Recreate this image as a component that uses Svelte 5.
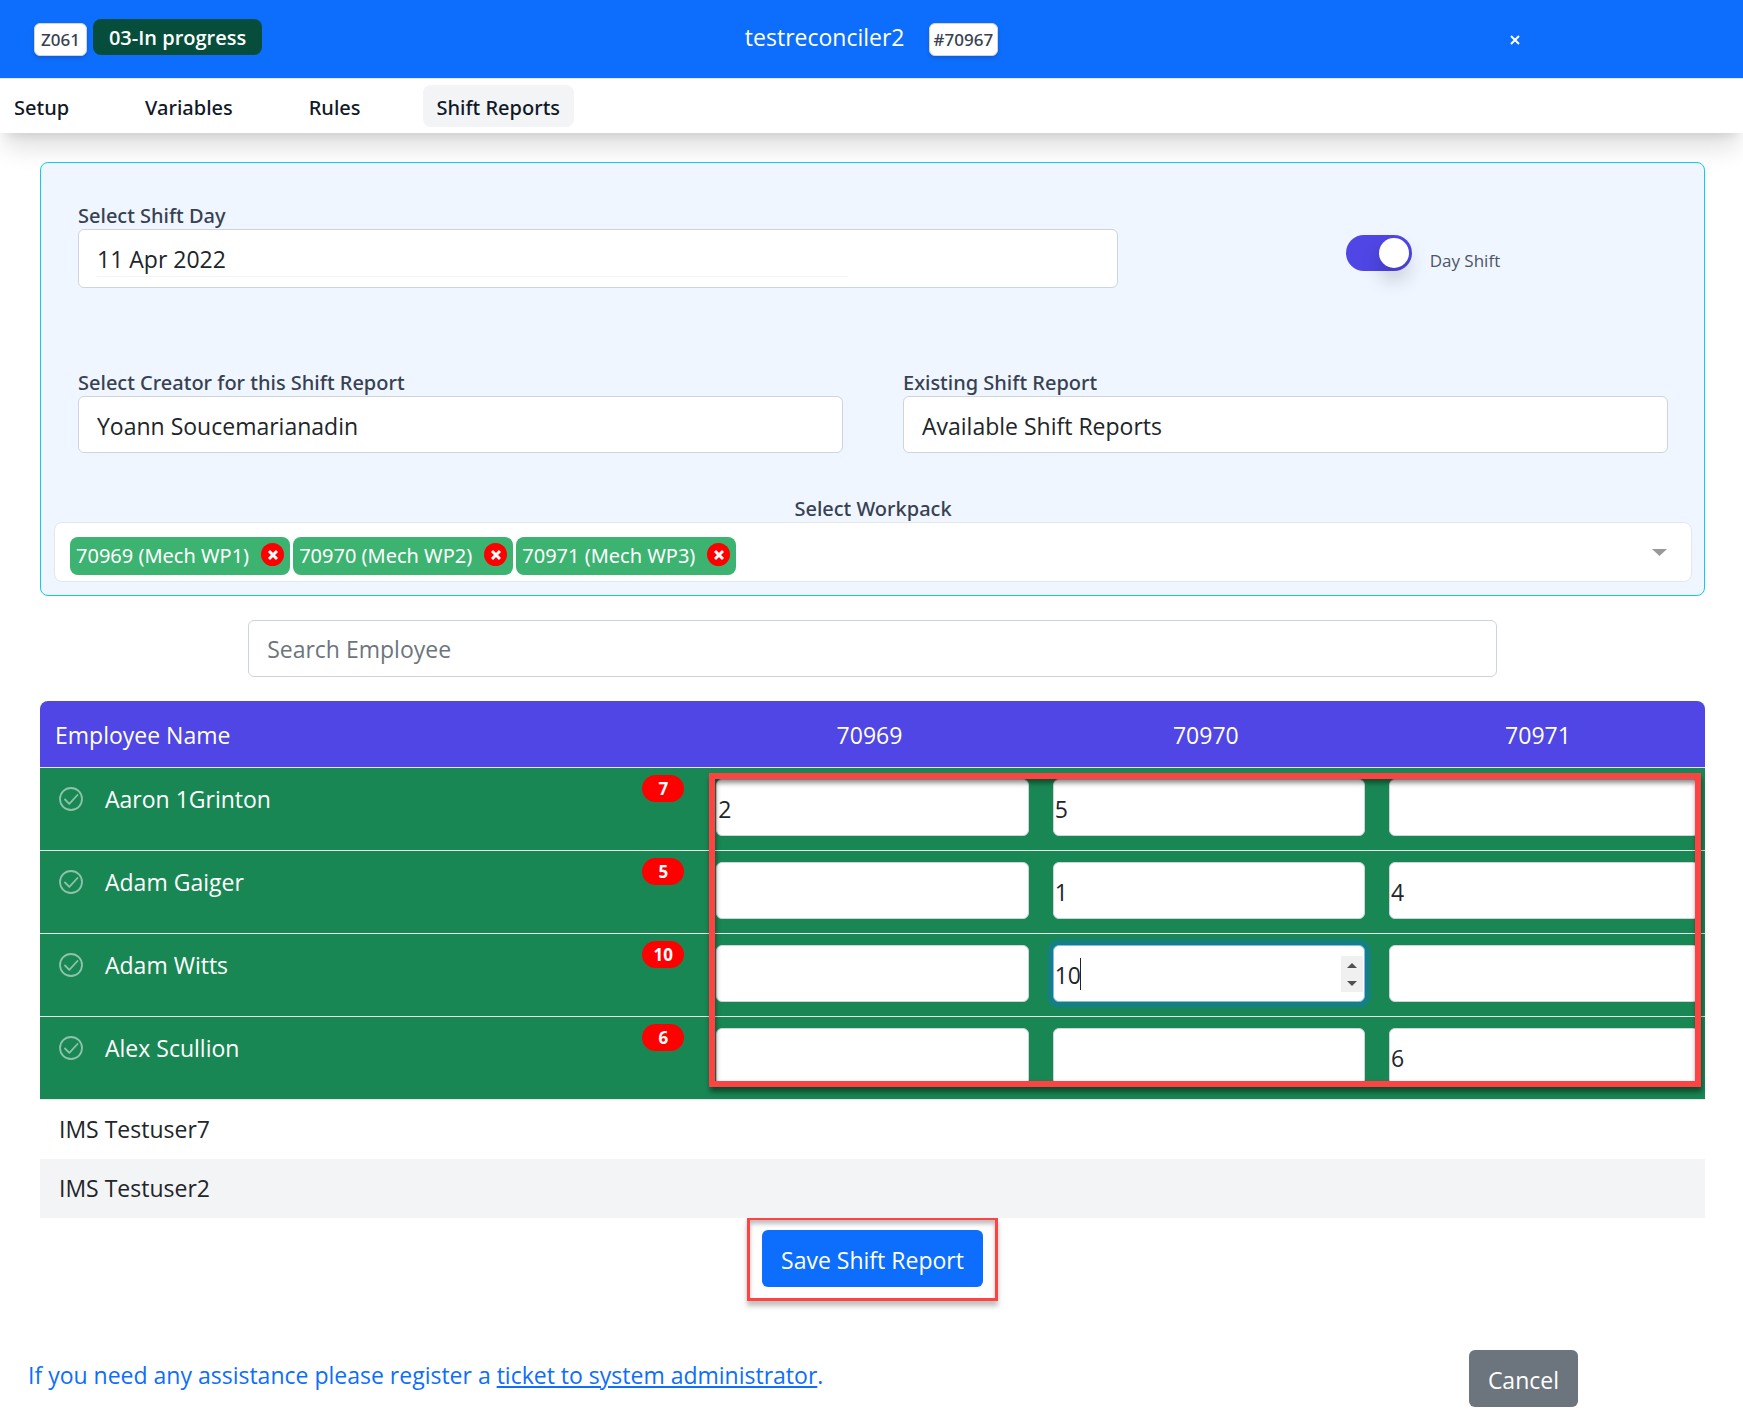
<script>
    import { onMount } from 'svelte';

    const tabs = ['Setup', 'Variables', 'Rules', 'Shift Reports'];
    const activeTab = 'Shift Reports';

    let workpacks = [
        { id: '70969', name: 'Mech WP1' },
        { id: '70970', name: 'Mech WP2' },
        { id: '70971', name: 'Mech WP3' }
    ];

    let employees = [
        { name: 'Aaron 1Grinton', hours: [2, 5, null] },
        { name: 'Adam Gaiger', hours: [null, 1, 4] },
        { name: 'Adam Witts', hours: [null, 10, null] },
        { name: 'Alex Scullion', hours: [null, null, 6] }
    ];

    const others = ['IMS Testuser7', 'IMS Testuser2'];
    const digitWidth = 13;

    let shiftDay = '11 Apr 2022';
    let dayShift = true;
    let search = '';
    let active = 'hours-2-1';
    let tableEl;

    function total(hours) {
        return hours.reduce((sum, h) => sum + (h || 0), 0);
    }

    function step(i, j, by) {
        employees[i].hours[j] = Math.max(0, (employees[i].hours[j] || 0) + by);
    }

    function caretLeft(value) {
        return 1 + String(value ?? '').length * digitWidth;
    }

    function removeWorkpack(id) {
        workpacks = workpacks.filter((w) => w.id !== id);
    }

    onMount(() => {
        tableEl.querySelector('#' + active).focus();
    });
</script>

<header class="topbar">
    <div class="status">
        <span class="tag">Z061</span>
        <span class="progress">03-In progress</span>
    </div>
    <div class="heading">
        <h1>testreconciler2</h1>
        <span class="tag">#70967</span>
    </div>
    <div class="close-wrap">
        <button class="close" type="button" aria-label="Close">
            <svg viewBox="0 0 10 10" width="10" height="10">
                <path d="M1 1L9 9M9 1L1 9" stroke="#fff" stroke-width="2" fill="none" />
            </svg>
        </button>
    </div>
</header>

<nav class="tabs">
    {#each tabs as tab}
        <a href="#{tab}" class:active={tab === activeTab}>{tab}</a>
    {/each}
</nav>

<main>
    <section class="panel">
        <div class="row day-row">
            <div class="field">
                <label for="day">Select Shift Day</label>
                <div class="control date">
                    <input id="day" type="text" bind:value={shiftDay} />
                </div>
            </div>
            <label class="toggle">
                <input type="checkbox" role="switch" bind:checked={dayShift} />
                <span>Day Shift</span>
            </label>
        </div>

        <div class="row">
            <div class="field">
                <label for="creator">Select Creator for this Shift Report</label>
                <select id="creator" class="control">
                    <option>Yoann Soucemarianadin</option>
                </select>
            </div>
            <div class="field">
                <label for="existing">Existing Shift Report</label>
                <select id="existing" class="control">
                    <option>Available Shift Reports</option>
                </select>
            </div>
        </div>

        <div class="workpack">
            <span class="label" id="workpack-label">Select Workpack</span>
            <div class="multi" role="group" aria-labelledby="workpack-label">
                <div class="chips">
                    {#each workpacks as wp}
                        <span class="chip">
                            {wp.id} ({wp.name})
                            <button type="button" aria-label="Remove {wp.id}" on:click={() => removeWorkpack(wp.id)}>
                                <svg viewBox="0 0 12 12" width="12" height="12">
                                    <path d="M2 2L10 10M10 2L2 10" stroke="#fff" stroke-width="3" fill="none" />
                                </svg>
                            </button>
                        </span>
                    {/each}
                </div>
                <button class="caret" type="button" aria-label="Open workpacks">
                    <svg viewBox="0 0 15 7" width="15" height="7"><path d="M0 0H15L7.5 7Z" fill="#999" /></svg>
                </button>
            </div>
        </div>
    </section>

    <input class="control search" type="search" aria-label="Search Employee" placeholder="Search Employee" bind:value={search} />

    <div class="table-wrap">
        <table bind:this={tableEl}>
            <colgroup>
                <col class="col-name" />
                <col class="col-hours" />
                <col class="col-hours" />
                <col />
            </colgroup>
            <thead>
                <tr>
                    <th scope="col" class="name-head">Employee Name</th>
                    {#each workpacks as wp}
                        <th scope="col">{wp.id}</th>
                    {/each}
                </tr>
            </thead>
            <tbody>
                {#each employees as employee, i}
                    <tr class="selected">
                        <td class="name-cell">
                            <div class="name">
                                <svg viewBox="0 0 24 24" width="24" height="24" fill="none" stroke="#fff" stroke-opacity="0.5">
                                    <circle cx="12" cy="12" r="11" stroke-width="1.8" />
                                    <path d="M6 12.5L10.3 16.8L18.5 8" stroke-width="1.8" stroke-linecap="round" stroke-linejoin="round" />
                                </svg>
                                <span>{employee.name}</span>
                                <span class="total">{total(employee.hours)}</span>
                            </div>
                        </td>
                        {#each workpacks as wp, j}
                            <td class="hours-cell">
                                <div class="hours" class:active={active === `hours-${i}-${j}`}>
                                    <input
                                        id="hours-{i}-{j}"
                                        type="number"
                                        aria-label="{employee.name} {wp.id}"
                                        bind:value={employee.hours[j]}
                                        on:focus={() => (active = `hours-${i}-${j}`)}
                                    />
                                    {#if active === `hours-${i}-${j}`}
                                        <span class="cursor" style="left: {caretLeft(employee.hours[j])}px"></span>
                                        <div class="spinner">
                                            <button type="button" tabindex="-1" aria-label="Increase" on:click={() => step(i, j, 1)}>
                                                <svg viewBox="0 0 10 5" width="10" height="5"><path d="M0 5L5 0L10 5Z" fill="#505050" /></svg>
                                            </button>
                                            <button type="button" tabindex="-1" aria-label="Decrease" on:click={() => step(i, j, -1)}>
                                                <svg viewBox="0 0 10 5" width="10" height="5"><path d="M0 0L5 5L10 0Z" fill="#505050" /></svg>
                                            </button>
                                        </div>
                                    {/if}
                                </div>
                            </td>
                        {/each}
                    </tr>
                {/each}
                {#each others as name}
                    <tr class="other">
                        <td colspan="4">{name}</td>
                    </tr>
                {/each}
            </tbody>
        </table>
        <div class="frame"></div>
    </div>

    <div class="save">
        <button class="btn primary" type="button">Save Shift Report</button>
    </div>
</main>

<footer>
    <p>If you need any assistance please register a <a href="#ticket">ticket to system administrator</a>.</p>
    <button class="btn secondary" type="button">Cancel</button>
</footer>

<style>
    :global(body) {
        --medium-font: "Noto Sans", "Open Sans", sans-serif;
        background: #fff;
        color: #212529;
        font-family: "Open Sans", "Noto Sans", sans-serif;
        font-size: 23px;
        line-height: 36px;
    }

    :global(*) {
        box-sizing: border-box;
    }

    input,
    select,
    button {
        font: inherit;
        color: inherit;
        margin: 0;
    }

    button {
        border: none;
        cursor: pointer;
    }

    .topbar {
        display: grid;
        grid-template-columns: 1fr auto 1fr;
        align-items: center;
        height: 78px;
        background: #0d6efd;
        color: #fff;
    }

    .status {
        display: flex;
        gap: 6px;
        padding: 0 0 4px 34px;
    }

    .tag {
        height: 33px;
        padding: 0 4px;
        border: 1px solid #d1d5db;
        border-radius: 6px;
        background: #fff;
        box-shadow: 0 2px 4px rgba(0, 0, 0, 0.15);
        color: #374151;
        font-family: var(--medium-font);
        font-size: 17px;
        font-weight: 500;
        line-height: 32px;
    }

    .status .tag {
        padding: 0 6px;
        margin-top: 4px;
    }

    .progress {
        height: 36px;
        padding: 0 16px;
        border-radius: 8px;
        background: #064e3b;
        font-size: 20px;
        font-weight: 600;
        line-height: 38px;
    }

    .heading {
        display: flex;
        align-items: center;
        gap: 24px;
    }

    h1 {
        margin: 0;
        padding-bottom: 4px;
        font-size: 23px;
        font-weight: 400;
    }

    .close-wrap {
        display: flex;
        justify-content: flex-end;
        padding: 2px 216px 0 0;
    }

    .close {
        display: flex;
        padding: 7px;
        background: none;
    }

    .tabs {
        display: flex;
        align-items: center;
        gap: 48px;
        height: 55px;
        border-top: 1px solid #e5e7eb;
        background: #fff;
        box-shadow: 0 20px 25px -5px rgba(0, 0, 0, 0.12), 0 8px 10px -6px rgba(0, 0, 0, 0.1);
    }

    .tabs a {
        height: 42px;
        padding: 0 14px;
        border-radius: 8px;
        color: #111827;
        font-family: var(--medium-font);
        font-size: 20px;
        font-weight: 500;
        line-height: 46px;
        text-decoration: none;
    }

    .tabs a.active {
        background: #f3f4f6;
    }

    main {
        padding: 29px 38px 0 40px;
    }

    .panel {
        position: relative;
        padding: 34px 14px 13px 13px;
        border: 1px solid #0dcaf0;
        border-radius: 8px;
        background: #eff6ff;
    }

    .row {
        display: grid;
        grid-template-columns: 1fr 1fr;
        gap: 60px;
        padding: 0 22px 0 24px;
        margin-bottom: 37px;
    }

    .day-row {
        grid-template-columns: 65.4% 1fr;
        gap: 0;
        margin-bottom: 76px;
    }

    .field {
        display: flex;
        flex-direction: column;
    }

    .field label,
    .label {
        padding-top: 6px;
        color: #374151;
        font-family: var(--medium-font);
        font-size: 20px;
        font-weight: 500;
        line-height: 26px;
    }

    .control {
        height: 57px;
        padding: 2px 18px 0;
        border: 1px solid #ced4da;
        border-radius: 6px;
        background: #fff;
        color: #212529;
        appearance: none;
        outline: none;
    }

    .date {
        height: 59px;
    }

    .date input {
        display: block;
        width: 75%;
        height: 45px;
        padding: 10px 0 0;
        border: none;
        border-bottom: 1px solid #f3f4f6;
        outline: none;
    }

    .toggle {
        display: flex;
        align-items: center;
        justify-content: center;
        gap: 18px;
        padding: 20px 0 0 60px;
        color: #4b5563;
        font-size: 17px;
    }

    .toggle span {
        padding-top: 16px;
    }

    .toggle input {
        display: flex;
        width: 66px;
        height: 36px;
        padding: 3px;
        border-radius: 18px;
        background: #9ca3af;
        appearance: none;
    }

    .toggle input::before {
        content: "";
        width: 30px;
        height: 30px;
        border-radius: 50%;
        background: #fff;
        box-shadow: 0 12px 20px rgba(0, 0, 0, 0.18);
    }

    .toggle input:checked {
        justify-content: flex-end;
        background: #4f46e5;
    }

    .workpack {
        display: flex;
        flex-direction: column;
        margin-right: -2px;
    }

    .label {
        align-self: center;
    }

    .multi {
        display: flex;
        align-items: center;
        justify-content: space-between;
        height: 60px;
        padding: 0 24px 0 15px;
        border: 1px solid #e5e7eb;
        border-radius: 8px;
        background: #fff;
    }

    .chips {
        display: flex;
        gap: 3px;
        padding-top: 8px;
    }

    .chip {
        display: flex;
        align-items: center;
        gap: 12px;
        height: 38px;
        padding: 0 6px;
        border-radius: 8px;
        background: #3cb371;
        color: #fff;
        font-family: var(--medium-font);
        font-size: 20px;
    }

    .chip button {
        display: flex;
        align-items: center;
        justify-content: center;
        width: 23px;
        height: 23px;
        padding: 0;
        margin-bottom: 3px;
        border-radius: 50%;
        background: red;
    }

    .caret {
        display: flex;
        padding: 0;
        background: none;
    }

    .search {
        display: block;
        width: 75%;
        padding-top: 0;
        margin: 24px auto;
    }

    .search::placeholder {
        color: #6c757d;
        opacity: 1;
    }

    .table-wrap {
        position: relative;
    }

    table {
        width: 100%;
        border-collapse: separate;
        border-spacing: 0;
        table-layout: fixed;
    }

    .col-name {
        width: 39.9%;
    }

    .col-hours {
        width: 20.2%;
    }

    th {
        height: 67px;
        padding: 2px 6px 0 0;
        border-bottom: 1px solid #e5e7eb;
        background: #4f46e5;
        color: #fff;
        font-weight: 400;
    }

    th:first-child {
        border-top-left-radius: 8px;
    }

    th:last-child {
        border-top-right-radius: 8px;
    }

    .name-head {
        padding-left: 15px;
        text-align: left;
    }

    td {
        padding: 0;
        vertical-align: top;
    }

    .selected td {
        height: 83px;
        border-bottom: 1px solid #e5e7eb;
        background: #198754;
        color: #fff;
    }

    .name {
        display: flex;
        align-items: flex-start;
        gap: 22px;
        padding: 13px 20px 0 19px;
    }

    .name svg {
        margin-top: 6px;
    }

    .total {
        width: 42px;
        height: 27px;
        margin: -6px 0 0 auto;
        border-radius: 14px;
        background: red;
        font-size: 17px;
        font-weight: 700;
        line-height: 28px;
        text-align: center;
    }

    .selected .hours-cell {
        padding: 11px 12px 0;
    }

    .selected .hours-cell:last-child {
        padding-right: 6px;
    }

    .hours {
        position: relative;
    }

    .hours input {
        display: block;
        width: 100%;
        height: 57px;
        padding: 2px 1px 0;
        border: 1px solid #ced4da;
        border-radius: 6px;
        background: #fff;
        caret-color: transparent;
        color: #212529;
        outline: none;
        appearance: textfield;
    }

    .hours.active input {
        border-color: #86b7fe;
        box-shadow: 0 0 0 6px rgba(13, 110, 253, 0.25);
    }

    .cursor {
        position: absolute;
        top: 13px;
        width: 1px;
        height: 32px;
        background: #212529;
    }

    .spinner {
        position: absolute;
        top: 11px;
        right: 2px;
        display: flex;
        flex-direction: column;
        width: 22px;
        height: 36px;
        background: #f0f0f0;
    }

    .spinner button {
        display: flex;
        flex: 1;
        align-items: center;
        justify-content: center;
        padding: 0;
        background: none;
    }

    .other td {
        height: 59px;
        padding: 11px 19px 0;
    }

    .other:nth-child(even) td {
        background: #f3f4f6;
    }

    .frame {
        position: absolute;
        top: 72px;
        right: 4px;
        left: calc(40% + 3px);
        height: 314px;
        border: 6px solid #ff4343;
        box-shadow: 1px 5px 5px rgba(0, 0, 0, 0.45), inset 1px 4px 5px rgba(0, 0, 0, 0.45);
        pointer-events: none;
    }

    .save {
        width: fit-content;
        padding: 10px 12px 11px;
        margin: -1px auto 0;
        border: 3px solid #ff4343;
        box-shadow: 0 5px 5px rgba(0, 0, 0, 0.25), inset 0 4px 4px rgba(0, 0, 0, 0.25);
    }

    .btn {
        display: block;
        height: 57px;
        padding: 2px 19px 0;
        border-radius: 6px;
        color: #fff;
    }

    .primary {
        background: #0d6efd;
    }

    .secondary {
        background: #6c757d;
    }

    footer {
        display: flex;
        align-items: center;
        justify-content: space-between;
        padding: 49px 165px 10px 28px;
        color: #0d6efd;
    }

    footer p {
        margin: 0;
        padding-bottom: 8px;
    }

    footer a {
        color: inherit;
    }
</style>
